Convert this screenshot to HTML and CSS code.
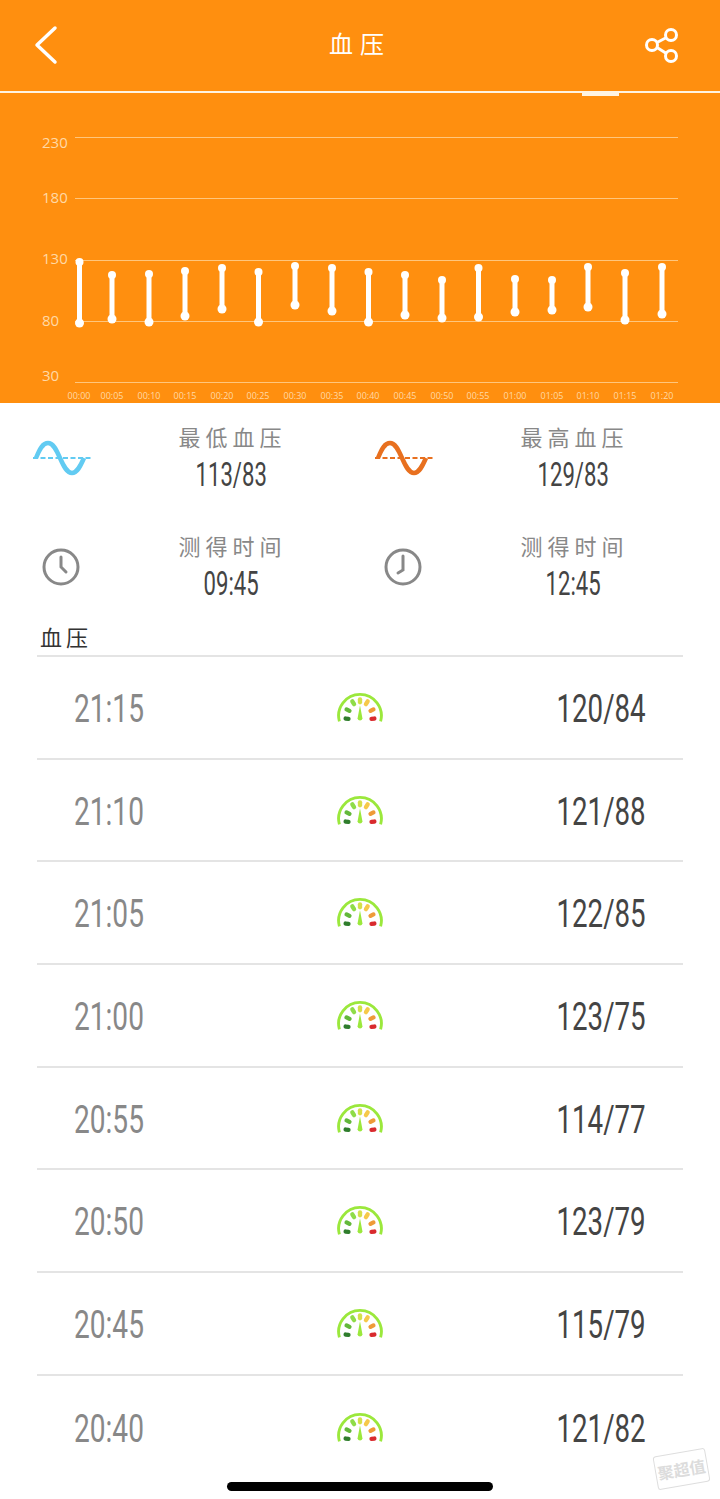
FILE: index.html
```html
<!DOCTYPE html>
<html lang="zh-CN">
<head>
  <meta charset="UTF-8" />
  <meta name="viewport" content="width=device-width, initial-scale=1" />
  <title>血压</title>
  <link rel="stylesheet" href="styles.css">
</head>
<body>

<svg class="defs" width="0" height="0" aria-hidden="true">
  <symbol id="gauge" viewBox="0 0 48 34">
    <path d="M2.500 31.500A22.300 22.300 0 1 1 45.500 31.500" fill="none" stroke="#9be83c" stroke-width="3"/>
    <g fill="none" stroke-width="4.500" stroke-linecap="round">
      <path d="M9 28.500l3 .3" stroke="#2f7d2c"/>
      <path d="M10 19l3 1.500" stroke="#63b83a"/>
      <path d="M16 10.500l1.800 3" stroke="#8fdc48"/>
      <path d="M24 8.500v3" stroke="#d3e04a"/>
      <path d="M32 10.500l-1.800 3" stroke="#f6c94a"/>
      <path d="M38 19l-3 1.500" stroke="#ee9a38"/>
      <path d="M39 28.500l-3 .3" stroke="#d92a2e"/>
    </g>
    <path d="M24 15l-2.600 13.500a2.700 2.700 0 0 0 5.200 0z" fill="#9be83c"/>
  </symbol>
</svg>

<div class="page">
  <div class="top">
    <header class="nav">
      <svg class="nav-icon" width="26" height="40" viewBox="0 0 26 40" fill="none" stroke="#fff" stroke-width="3.500" stroke-linecap="round" stroke-linejoin="round">
        <path d="M22 3L4 20l18 17"/>
      </svg>
      <h1>血压</h1>
      <svg class="nav-icon nav-share" width="36" height="36" viewBox="0 0 36 36" fill="none" stroke="#fff" stroke-width="3">
        <circle cx="8" cy="18" r="5.500"/>
        <circle cx="27" cy="8" r="5.500"/>
        <circle cx="27" cy="29" r="5.500"/>
        <path d="M13 15.500l9.500-5M13 20.500l9.500 6"/>
      </svg>
    </header>
    <div class="tab-line"><span class="tab-mark"></span></div>

    <!-- chart is a free canvas, coordinates are the data -->
    <svg class="chart" width="720" height="307" viewBox="0 96 720 307">
      <g class="grid">
        <path d="M75 137.500H678M75 198.500H678M75 260.500H678M75 321.500H678M75 382.500H678"/>
      </g>
      <g class="y-labels">
        <text x="42" y="148">230</text>
        <text x="42" y="203">180</text>
        <text x="42" y="264">130</text>
        <text x="42" y="326">80</text>
        <text x="42" y="381">30</text>
      </g>
      <g class="bars">
        <path d="M79.500 262V323" stroke-width="6"/>
        <path d="M112 275V319"/>
        <path d="M149 274V322"/>
        <path d="M185 271V316"/>
        <path d="M222 268V309"/>
        <path d="M258.500 272V322" stroke-width="6"/>
        <path d="M295 266V305"/>
        <path d="M332 268V311"/>
        <path d="M368.500 272V322" stroke-width="6"/>
        <path d="M405 275V315"/>
        <path d="M442 280V318"/>
        <path d="M478.500 268V317" stroke-width="6"/>
        <path d="M515 279V312"/>
        <path d="M552 280V310"/>
        <path d="M588 267V307"/>
        <path d="M625 273V320" stroke-width="6"/>
        <path d="M662 267V314"/>
      </g>
      <g class="dots">
        <circle cx="79.500" cy="262" r="4"/><circle cx="79.500" cy="323" r="4.500"/>
        <circle cx="112" cy="275" r="4"/><circle cx="112" cy="319" r="4.500"/>
        <circle cx="149" cy="274" r="4"/><circle cx="149" cy="322" r="4.500"/>
        <circle cx="185" cy="271" r="4"/><circle cx="185" cy="316" r="4.500"/>
        <circle cx="222" cy="268" r="4"/><circle cx="222" cy="309" r="4.500"/>
        <circle cx="258.500" cy="272" r="4"/><circle cx="258.500" cy="322" r="4.500"/>
        <circle cx="295" cy="266" r="4"/><circle cx="295" cy="305" r="4.500"/>
        <circle cx="332" cy="268" r="4"/><circle cx="332" cy="311" r="4.500"/>
        <circle cx="368.500" cy="272" r="4"/><circle cx="368.500" cy="322" r="4.500"/>
        <circle cx="405" cy="275" r="4"/><circle cx="405" cy="315" r="4.500"/>
        <circle cx="442" cy="280" r="4"/><circle cx="442" cy="318" r="4.500"/>
        <circle cx="478.500" cy="268" r="4"/><circle cx="478.500" cy="317" r="4.500"/>
        <circle cx="515" cy="279" r="4"/><circle cx="515" cy="312" r="4.500"/>
        <circle cx="552" cy="280" r="4"/><circle cx="552" cy="310" r="4.500"/>
        <circle cx="588" cy="267" r="4"/><circle cx="588" cy="307" r="4.500"/>
        <circle cx="625" cy="273" r="4"/><circle cx="625" cy="320" r="4.500"/>
        <circle cx="662" cy="267" r="4"/><circle cx="662" cy="314" r="4.500"/>
      </g>
      <g class="x-labels">
        <text x="79" y="399">00:00</text>
        <text x="112" y="399">00:05</text>
        <text x="149" y="399">00:10</text>
        <text x="185" y="399">00:15</text>
        <text x="222" y="399">00:20</text>
        <text x="258" y="399">00:25</text>
        <text x="295" y="399">00:30</text>
        <text x="332" y="399">00:35</text>
        <text x="368" y="399">00:40</text>
        <text x="405" y="399">00:45</text>
        <text x="442" y="399">00:50</text>
        <text x="478" y="399">00:55</text>
        <text x="515" y="399">01:00</text>
        <text x="552" y="399">01:05</text>
        <text x="588" y="399">01:10</text>
        <text x="625" y="399">01:15</text>
        <text x="662" y="399">01:20</text>
      </g>
    </svg>
  </div>

  <section class="stats">
    <div class="stat">
      <svg class="stat-icon" width="60" height="36" viewBox="0 0 60 36" fill="none">
        <path d="M5 18C9 8 12 3 17 3s8 6 12 15 7 15 12 15 8-6 12-15" stroke="#62cbf2" stroke-width="4.500"/>
        <path d="M2 18H60" stroke="#62cbf2" stroke-width="2" stroke-dasharray="5 2.500"/>
      </svg>
      <div class="stat-text">
        <div class="stat-label">最低血压</div>
        <div class="stat-value"><span class="narrow">113/83</span></div>
      </div>
    </div>
    <div class="stat">
      <svg class="stat-icon" width="60" height="36" viewBox="0 0 60 36" fill="none">
        <path d="M5 18C9 8 12 3 17 3s8 6 12 15 7 15 12 15 8-6 12-15" stroke="#e8701f" stroke-width="4.500"/>
        <path d="M2 18H60" stroke="#e8701f" stroke-width="2" stroke-dasharray="5 2.500"/>
      </svg>
      <div class="stat-text">
        <div class="stat-label">最高血压</div>
        <div class="stat-value"><span class="narrow">129/83</span></div>
      </div>
    </div>
    <div class="stat">
      <svg class="stat-icon" width="38" height="38" viewBox="0 0 38 38" fill="none" stroke="#888" stroke-width="3">
        <circle cx="19" cy="19" r="17"/>
        <path d="M19 9v10l5 5" stroke-linecap="round"/>
      </svg>
      <div class="stat-text">
        <div class="stat-label">测得时间</div>
        <div class="stat-value"><span class="narrow">09:45</span></div>
      </div>
    </div>
    <div class="stat">
      <svg class="stat-icon" width="38" height="38" viewBox="0 0 38 38" fill="none" stroke="#888" stroke-width="3">
        <circle cx="19" cy="19" r="17"/>
        <path d="M19 8v14l-5 3" stroke-linecap="round"/>
      </svg>
      <div class="stat-text">
        <div class="stat-label">测得时间</div>
        <div class="stat-value"><span class="narrow">12:45</span></div>
      </div>
    </div>
  </section>

  <h2 class="section-title">血压</h2>

  <ul class="records">
    <li class="record"><span class="record-time">21:15</span><svg class="gauge"><use href="#gauge"/></svg><span class="record-value">120/84</span></li>
    <li class="record"><span class="record-time">21:10</span><svg class="gauge"><use href="#gauge"/></svg><span class="record-value">121/88</span></li>
    <li class="record"><span class="record-time">21:05</span><svg class="gauge"><use href="#gauge"/></svg><span class="record-value">122/85</span></li>
    <li class="record"><span class="record-time">21:00</span><svg class="gauge"><use href="#gauge"/></svg><span class="record-value">123/75</span></li>
    <li class="record"><span class="record-time">20:55</span><svg class="gauge"><use href="#gauge"/></svg><span class="record-value">114/77</span></li>
    <li class="record"><span class="record-time">20:50</span><svg class="gauge"><use href="#gauge"/></svg><span class="record-value">123/79</span></li>
    <li class="record"><span class="record-time">20:45</span><svg class="gauge"><use href="#gauge"/></svg><span class="record-value">115/79</span></li>
    <li class="record"><span class="record-time">20:40</span><svg class="gauge"><use href="#gauge"/></svg><span class="record-value">121/82</span></li>
  </ul>

  <div class="watermark"><span>聚超值</span></div>
  <div class="home-bar"></div>
</div>

</body>
</html>
```

FILE: styles.css
```css
* { box-sizing: border-box; }
html, body { margin: 0; padding: 0; }
body {
  background: #fff;
  font-family: "Noto Sans CJK SC", "Liberation Sans", sans-serif;
}
.defs { position: absolute; }
.page { position: relative; width: 720px; height: 1499px; overflow: hidden; background: #fff; }

.top { background: #ff8f0f; height: 403px; }
.nav {
  display: grid; grid-template-columns: 1fr auto 1fr; align-items: center;
  height: 91px; padding: 0 40px 1px 33px;
}
.nav-icon { display: block; }
.nav-share { justify-self: end; }
.nav h1 { margin: 0 0 4px; color: #fff; font-size: 24px; font-weight: 400; letter-spacing: 7px; text-indent: 7px; line-height: 32px; }
.tab-line { position: relative; height: 2px; background: #fff4e2; }
.tab-mark { position: absolute; left: 582px; top: 0; width: 37px; height: 5px; background: #fff4e2; }
.chart { display: block; margin-top: 3px; }

.grid path { fill: none; stroke: #ffc67d; stroke-width: 1; }
.y-labels text { fill: #ffd9a6; font: 15px "Open Sans", sans-serif; }
.x-labels text { fill: #ffd9a6; font: 9px "Open Sans", sans-serif; text-anchor: middle; }
.bars path { fill: none; stroke: #fff; stroke-width: 5; }
.dots circle { fill: #fff; }

.stats {
  display: grid; grid-template-columns: 342px 342px;
  row-gap: 35px; padding-top: 18px;
}
.stat { display: grid; grid-template-columns: 122px 218px; align-items: center; }
.stat-icon { justify-self: center; }
.stat-text { text-align: center; }
.stat-label { color: #888; font-size: 22px; line-height: 30px; letter-spacing: 5px; text-indent: 3px; }
.stat-value { color: #444; font-family: Roboto, sans-serif; font-size: 33px; line-height: 44px; }
/* no condensed face installed, so squeeze Roboto */
.narrow { display: inline-block; transform: translateY(2px) scaleX(.67); }

.section-title {
  margin: 16px 0 3px 40px; color: #333;
  font-size: 22px; font-weight: 400; line-height: 32px; letter-spacing: 4px;
}
.records { list-style: none; margin: 0 37px; padding: 0; border-top: 2px solid #e4e4e4; }
.record {
  display: grid; grid-template-columns: 1fr auto 1fr; align-items: center;
  height: 102.7px; padding: 3px 37px 0; border-bottom: 2px solid #e4e4e4;
  font-family: Roboto, sans-serif; font-size: 39px; line-height: 50px;
}
.record:last-child { border-bottom: none; }
.record-time { color: #888; justify-self: start; transform: scaleX(.72); transform-origin: left center; }
.record-value { color: #444; justify-self: end; transform: scaleX(.71); transform-origin: right center; }
.gauge { display: block; width: 46px; height: 33px; margin-top: -3px; }

.watermark {
  position: absolute; left: 655px; top: 1452px; width: 53px; height: 34px;
  border: 1px solid #dedede; border-radius: 3px;
  transform: rotate(-10deg);
  display: flex; align-items: center; justify-content: center;
}
.watermark span { color: #dcdcdc; font-size: 16px; font-weight: 700; white-space: nowrap; }
.home-bar {
  position: absolute; left: 227px; top: 1482px; width: 266px; height: 9px;
  background: #000; border-radius: 5px;
}
```
